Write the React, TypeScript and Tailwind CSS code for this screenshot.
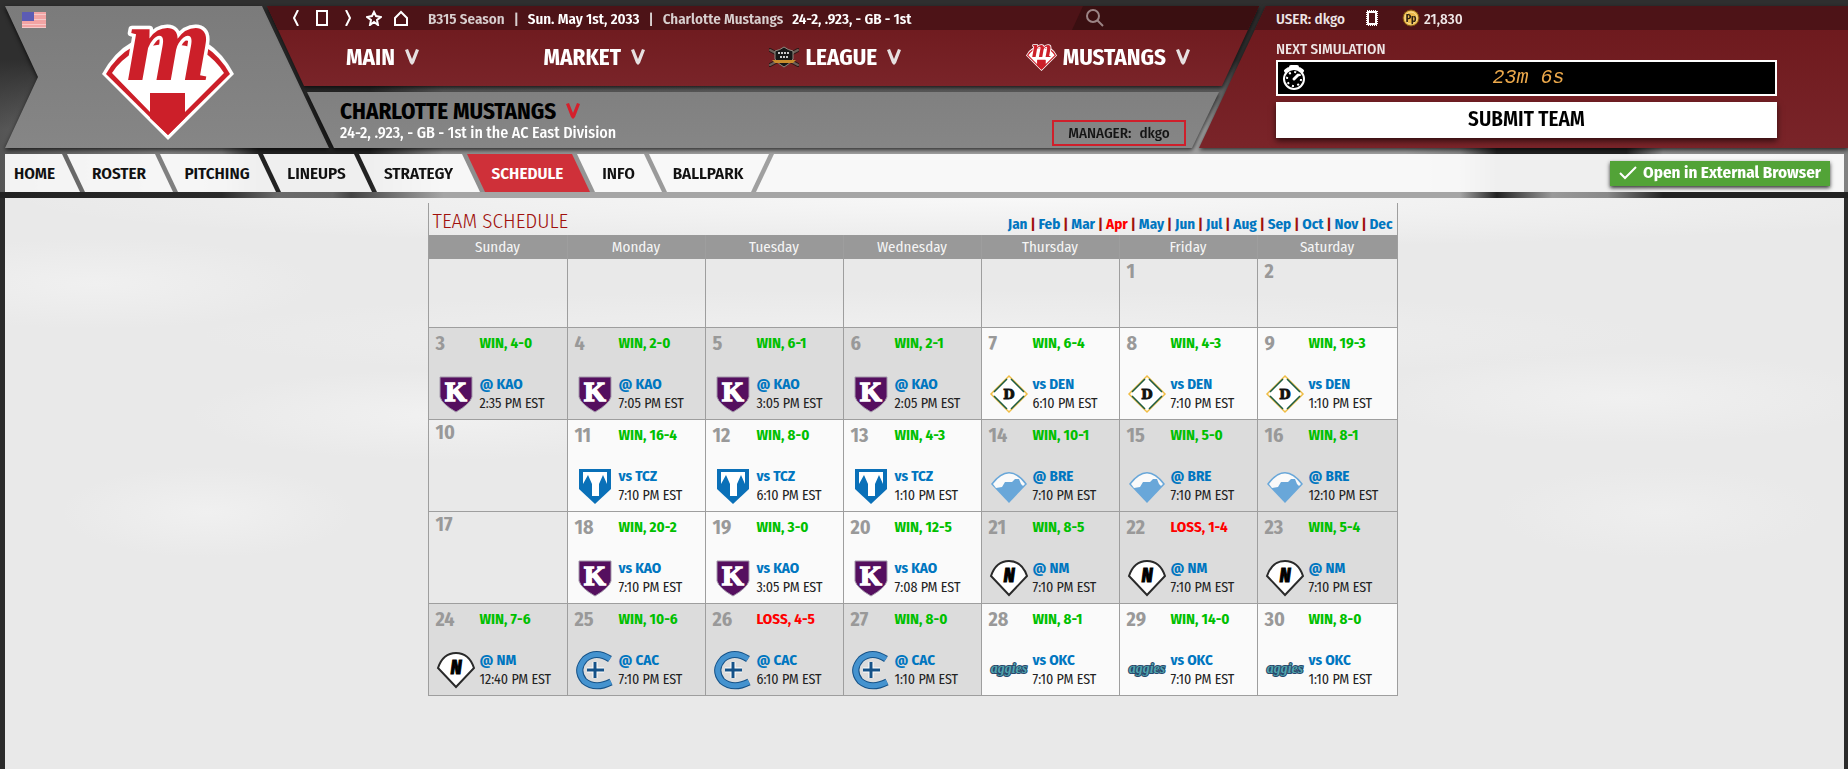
import clsx from "clsx"

interface TGame {
  day: number
  result: string
  team: string
  home?: boolean
  time: string
}

type TCell = TGame | number | null

const months = ["Jan", "Feb", "Mar", "Apr", "May", "Jun", "Jul", "Aug", "Sep", "Oct", "Nov", "Dec"]

const weekdays = ["Sunday", "Monday", "Tuesday", "Wednesday", "Thursday", "Friday", "Saturday"]

const away = (day: number, team: string, result: string, time: string): TGame => ({ day, team, result, time })

const home = (day: number, team: string, result: string, time: string): TGame => ({
  day,
  team,
  result,
  time,
  home: true,
})

const weeks: TCell[][] = [
  [null, null, null, null, null, 1, 2],
  [
    away(3, "KAO", "WIN, 4-0", "2:35 PM"),
    away(4, "KAO", "WIN, 2-0", "7:05 PM"),
    away(5, "KAO", "WIN, 6-1", "3:05 PM"),
    away(6, "KAO", "WIN, 2-1", "2:05 PM"),
    home(7, "DEN", "WIN, 6-4", "6:10 PM"),
    home(8, "DEN", "WIN, 4-3", "7:10 PM"),
    home(9, "DEN", "WIN, 19-3", "1:10 PM"),
  ],
  [
    10,
    home(11, "TCZ", "WIN, 16-4", "7:10 PM"),
    home(12, "TCZ", "WIN, 8-0", "6:10 PM"),
    home(13, "TCZ", "WIN, 4-3", "1:10 PM"),
    away(14, "BRE", "WIN, 10-1", "7:10 PM"),
    away(15, "BRE", "WIN, 5-0", "7:10 PM"),
    away(16, "BRE", "WIN, 8-1", "12:10 PM"),
  ],
  [
    17,
    home(18, "KAO", "WIN, 20-2", "7:10 PM"),
    home(19, "KAO", "WIN, 3-0", "3:05 PM"),
    home(20, "KAO", "WIN, 12-5", "7:08 PM"),
    away(21, "NM", "WIN, 8-5", "7:10 PM"),
    away(22, "NM", "LOSS, 1-4", "7:10 PM"),
    away(23, "NM", "WIN, 5-4", "7:10 PM"),
  ],
  [
    away(24, "NM", "WIN, 7-6", "12:40 PM"),
    away(25, "CAC", "WIN, 10-6", "7:10 PM"),
    away(26, "CAC", "LOSS, 4-5", "6:10 PM"),
    away(27, "CAC", "WIN, 8-0", "1:10 PM"),
    home(28, "OKC", "WIN, 8-1", "7:10 PM"),
    home(29, "OKC", "WIN, 14-0", "7:10 PM"),
    home(30, "OKC", "WIN, 8-0", "1:10 PM"),
  ],
]

const tabs = [
  { name: "HOME", width: "w-[75px]" },
  { name: "ROSTER", width: "w-[106px]" },
  { name: "PITCHING", width: "w-[116px]" },
  { name: "LINEUPS", width: "w-[109px]" },
  { name: "STRATEGY", width: "w-[121px]" },
  { name: "SCHEDULE", width: "w-[123px]" },
  { name: "INFO", width: "w-[85px]" },
  { name: "BALLPARK", width: "w-[120px]" },
]

const MustangsLogo = ({ className }: { className: string }) => (
  <svg viewBox="0 0 132 114" className={clsx("overflow-visible", className)} aria-hidden="true">
    <path d="M0 48Q12 26 30 16Q66 0 104 16Q121 27 132 48L66 114Z" fill="#fff" />
    <path d="M4 48Q14 30 32 20Q66 5 102 20Q118 30 128 48L66 109Z" fill="#cc1f29" />
    <path d="M10 47Q18 34 34 25Q66 11 100 25Q114 34 122 47L83 86V68H48V86Z" fill="#fff" />
    <text
      x="24"
      y="54"
      fontFamily="'Liberation Serif', serif"
      fontWeight="bold"
      fontStyle="italic"
      fontSize="110"
      fill="#cc1f29"
      stroke="#fff"
      strokeWidth="7"
      strokeLinejoin="round"
      paintOrder="stroke"
    >
      m
    </text>
    <path d="M48 67H83V92L66 109L48 92Z" fill="#cc1f29" />
  </svg>
)

const LeagueLogo = () => (
  <svg viewBox="0 0 30 22" className="h-[22px] w-[30px]" aria-hidden="true">
    <path d="M1 4L29 19M29 4L1 19" stroke="#2a1716" strokeWidth="4" strokeLinecap="round" />
    <path d="M1 4L29 19M29 4L1 19" stroke="#6d5f58" strokeWidth="2" strokeLinecap="round" />
    <path d="M6 5Q11 4 15 1Q19 4 24 5V13Q21 18 15 21Q9 18 6 13Z" fill="#171717" stroke="#8f8a80" />
    <path d="M9 7H21M11 11H19" stroke="#c9c9c9" strokeWidth="2" strokeDasharray="2 1" />
    <path d="M3 14H27L24 17H6Z" fill="#c98c2c" />
  </svg>
)

const Chevron = ({ className }: { className: string }) => (
  <svg viewBox="0 0 14 16" className={clsx("h-4 w-[14px]", className)} fill="currentColor" aria-hidden="true">
    <path d="M0 1L3 0L7 10L11 0L14 1L9 14L7 16L5 14Z" />
  </svg>
)

const TeamLogo = ({ team }: { team: string }) => (
  <svg viewBox="0 0 38 38" className="h-[38px] w-[38px] shrink-0 overflow-visible" aria-hidden="true">
    {team === "KAO" && (
      <>
        <path d="M3 2H35V22Q33 29 19 37Q5 29 3 22Z" fill="#550f5f" stroke="#a59bac" />
        <text
          x="19"
          y="26"
          textAnchor="middle"
          fontFamily="'Liberation Serif', serif"
          fontWeight="bold"
          fontSize="28"
          stroke="#fff"
          strokeWidth="1.5"
          fill="#fff"
        >
          K
        </text>
      </>
    )}
    {team === "DEN" && (
      <>
        <path d="M19 1L37 19L19 37L1 19Z" fill="#fff" stroke="#f0bd45" strokeWidth="1.5" />
        <path d="M17 4L4 17M21 4L34 17M17 34L4 21M21 34L34 21" stroke="#1c5c43" strokeWidth="1.5" />
        <text
          x="19"
          y="24"
          textAnchor="middle"
          fontFamily="'DejaVu Serif', serif"
          fontWeight="bold"
          fontSize="13"
          stroke="#111"
          fill="#111"
        >
          D
        </text>
      </>
    )}
    {team === "TCZ" && (
      <>
        <path d="M3 2H35V22L19 37L3 22Z" fill="#0a70b8" />
        <path d="M7 5H31V17L27 8L23 17V29H16V17L12 8L7 17Z" fill="#fff" />
      </>
    )}
    {team === "BRE" && (
      <>
        <path d="M1 17Q19-7 37 17L19 36Z" fill="#69a7d9" />
        <path d="M3 17Q19-4 35 17L33 19L31 17L29 12H25L22 15H15L12 20L6 21Z" fill="#fafafa" />
      </>
    )}
    {team === "NM" && (
      <>
        <path d="M1 17Q6 2 19 2Q32 2 37 17L19 36Z" fill="#fff" stroke="#2a2a2a" strokeWidth="2" />
        <text
          x="19"
          y="23"
          textAnchor="middle"
          fontFamily="'Fira Sans Condensed', 'Roboto Condensed', sans-serif"
          fontWeight="700"
          fontStyle="italic"
          fontSize="19"
          stroke="#000"
        >
          N
        </text>
      </>
    )}
    {team === "CAC" && (
      <>
        <path d="M34 8Q20-1 9 8Q-1 19 8 30Q19 39 35 31" fill="none" stroke="#155288" strokeWidth="7" />
        <path d="M34 8Q20-1 9 8Q-1 19 8 30Q19 39 35 31" fill="none" stroke="#4593cf" strokeWidth="5" />
        <path d="M19 11V27M11 19H28" stroke="#fff" strokeWidth="5" />
        <path d="M19 11V27M11 19H28" stroke="#155288" strokeWidth="3" />
      </>
    )}
    {team === "OKC" && (
      <text
        x="19"
        y="22"
        textAnchor="middle"
        fontFamily="'Liberation Serif', serif"
        fontWeight="bold"
        fontStyle="italic"
        fontSize="14"
        fill="#4fa3ad"
        stroke="#27476a"
        strokeWidth="2"
        paintOrder="stroke"
      >
        aggies
      </text>
    )}
  </svg>
)

const Header = () => {
  const bar = "bg-linear-to-b from-[#6c181c] to-[#7a2429]"
  return (
    <header className="flex pl-[5px] pt-1.5">
      <div className="drop-shadow-[0_2px_2px_rgba(0,0,0,0.7)]">
        <div className="flex h-[142px] w-[324px] items-start bg-linear-to-b from-[#7b7b7b] to-[#868686] [clip-path:polygon(0_0,257px_0,100%_100%,0_100%,33px_50%)]">
          <svg viewBox="0 0 24 16" className="ml-[17px] mt-1.5 h-4 w-6" role="img" aria-label="United States">
            <path d="M0 0H24V16H0Z" fill="#f6c9c9" />
            <path d="M0 1H24M0 4H24M0 6H24M0 9H24M0 11H24M0 14H24" stroke="#ee7f7f" />
            <path d="M0 0H12V9H0Z" fill="#5c5cb4" />
          </svg>
          <MustangsLogo className="ml-14 mt-5 h-[114px] w-[132px]" />
        </div>
      </div>

      <div className="-ml-[62px] flex min-w-0 flex-1 flex-col gap-1.5">
        <div className="drop-shadow-[0_2px_2px_rgba(0,0,0,0.7)]">
          <div className={clsx("h-20 [clip-path:polygon(0_0,100%_0,calc(100%-37px)_100%,37px_100%)]", bar)}>
            <div className="flex h-6 items-center bg-[#4d1317] pl-[25px] text-[15px] font-medium whitespace-nowrap text-[#d8cfcf]">
              <div className="flex w-[136px] items-center text-white">
                <button aria-label="Back" className="w-6">
                  <svg viewBox="0 0 8 16" className="h-4 w-2" fill="none" stroke="currentColor" strokeWidth="2">
                    <path d="M6 0L2 8L6 16" />
                  </svg>
                </button>
                <button aria-label="Page" className="w-7">
                  <svg viewBox="0 0 12 16" className="h-4 w-3" fill="none" stroke="currentColor" strokeWidth="2">
                    <path d="M1 1H11V15H1Z" />
                  </svg>
                </button>
                <button aria-label="Forward" className="w-[22px]">
                  <svg viewBox="0 0 8 16" className="h-4 w-2" fill="none" stroke="currentColor" strokeWidth="2">
                    <path d="M2 0L6 8L2 16" />
                  </svg>
                </button>
                <button aria-label="Favorites" className="w-7">
                  <svg viewBox="0 0 16 16" className="h-4 w-4" fill="none" stroke="currentColor" strokeWidth="2">
                    <path d="M8 2L10 6L15 7L11 10L12 15L8 12L4 15L5 10L1 7L6 6Z" />
                  </svg>
                </button>
                <button aria-label="Home" className="w-6">
                  <svg viewBox="0 0 14 16" className="h-4 w-[14px]" fill="none" stroke="currentColor" strokeWidth="2">
                    <path d="M1 15V8L7 2L13 8V15Z" />
                  </svg>
                </button>
              </div>
              <div className="flex gap-[9px] pt-0.5 font-semibold">
                <span>B315 Season</span>
                <span>|</span>
                <span className="text-white">Sun. May 1st, 2033</span>
                <span>|</span>
                <span>Charlotte Mustangs</span>
                <span className="text-white">24-2, .923, - GB - 1st</span>
              </div>
              <label className="ml-auto flex h-full w-[187px] items-center bg-[#3a0f11] pl-[14px] [clip-path:polygon(11px_0,100%_0,100%_100%,0_100%)]">
                <svg viewBox="0 0 18 18" className="h-[18px] w-[18px]" fill="none" stroke="#9b8485" strokeWidth="2">
                  <circle cx="7" cy="7" r="6" />
                  <path d="M11 11L17 17" />
                </svg>
                <input type="search" aria-label="Search" className="ml-2 w-24 bg-transparent text-white outline-none" />
              </label>
            </div>
            <nav className="flex h-[54px] items-center justify-between pl-[79px] pr-[69px] text-[23px] font-bold text-white">
              <button className="flex items-center gap-2.5">
                MAIN
                <Chevron className="text-[#e6e0e0]" />
              </button>
              <button className="flex items-center gap-2.5">
                MARKET
                <Chevron className="text-[#e6e0e0]" />
              </button>
              <button className="flex items-center gap-2.5">
                <span className="flex items-center gap-1.5">
                  <LeagueLogo />
                  LEAGUE
                </span>
                <Chevron className="text-[#e6e0e0]" />
              </button>
              <button className="flex items-center gap-2.5">
                <span className="flex items-center gap-1.5">
                  <MustangsLogo className="h-[27px] w-[31px]" />
                  MUSTANGS
                </span>
                <Chevron className="text-[#e6e0e0]" />
              </button>
            </nav>
          </div>
        </div>

        <div className="mx-10 drop-shadow-[0_2px_2px_rgba(0,0,0,0.7)]">
          <div className="flex h-14 items-end justify-between bg-linear-to-b from-[#808080] to-[#868686] px-[33px] [clip-path:polygon(0_0,100%_0,calc(100%-27px)_100%,27px_100%)]">
            <div className="pb-[5px]">
              <h1>
                <button className="flex items-center gap-2.5 text-[23px] leading-6 font-bold text-black">
                  CHARLOTTE MUSTANGS
                  <Chevron className="text-[#d5202c]" />
                </button>
              </h1>
              <p className="text-[16px] leading-5 font-medium text-white">
                24-2, .923, - GB - 1st in the AC East Division
              </p>
            </div>
            <div className="mb-0.5 flex h-[26px] w-[134px] items-center justify-center gap-2 border-2 border-[#cf1f2b] text-[15px] font-medium text-[#151515]">
              <span>MANAGER:</span>
              <span>dkgo</span>
            </div>
          </div>
        </div>
      </div>

      <div className="-ml-[60px] drop-shadow-[0_2px_2px_rgba(0,0,0,0.7)]">
        <div
          className={clsx(
            "h-[142px] w-[649px] text-[15px] font-medium text-[#eee6e6] [clip-path:polygon(67px_0,100%_0,100%_100%,0_100%)]",
            bar,
          )}
        >
          <div className="flex h-6 items-center bg-[#4d1317] pl-[77px]">
            <span className="w-[90px] pt-0.5">USER: dkgo</span>
            <svg viewBox="0 0 12 16" className="h-4 w-3" fill="none" stroke="#fff" aria-hidden="true">
              <path d="M2 2H10V14H2Z" strokeWidth="2" />
              <path d="M1 1H11V15H1Z" strokeWidth="2" strokeDasharray="1 1" />
            </svg>
            <svg viewBox="0 0 18 18" className="ml-6 h-[18px] w-[18px]" aria-hidden="true">
              <circle cx="9" cy="9" r="8" fill="#ecb94a" stroke="#7a4f12" />
              <circle cx="9" cy="9" r="6" fill="none" stroke="#fbe19a" />
              <text x="9" y="13" textAnchor="middle" fontSize="10" fontWeight="bold" fill="#2d2013">
                Pp
              </text>
            </svg>
            <span className="ml-1 pt-0.5">21,830</span>
          </div>
          <div className="flex flex-col pr-[71px] pl-[77px]">
            <h2 className="mt-2 mb-1 h-[18px] leading-[22px]">NEXT SIMULATION</h2>
            <div className="flex h-9 items-center border-2 border-white bg-black px-1">
              <svg viewBox="0 0 24 26" className="h-[26px] w-6" fill="none" stroke="#fff" aria-hidden="true">
                <path d="M4 6L7 4M20 6L17 4M9 2H15" strokeWidth="4" strokeLinecap="round" />
                <circle cx="12" cy="14" r="10" strokeWidth="2" fill="#000" />
                <circle cx="12" cy="14" r="7" strokeWidth="2" strokeDasharray="2 3.5" />
                <path d="M12 14L16 10" strokeWidth="3" strokeLinecap="round" />
              </svg>
              <span className="flex-1 pr-5 text-center font-['Liberation_Mono',monospace] text-[20px] font-normal italic text-[#eda94b]">
                23m 6s
              </span>
            </div>
            <button className="mt-1.5 h-9 bg-white text-[21px] font-semibold text-black shadow-[0_3px_6px_rgba(0,0,0,0.6)]">
              SUBMIT TEAM
            </button>
          </div>
        </div>
      </div>
    </header>
  )
}

const TabBar = () => (
  <div className="mt-1.5 mr-1 ml-[5px] flex h-[38px]">
    <nav className="flex text-[17px] font-semibold text-[#111]">
      {tabs.map(({ name, width }, i) => (
        <a
          key={name}
          href={`#${name.toLowerCase()}`}
          className={clsx(
            "flex items-center justify-center pt-0.5",
            width,
            i > 0 && "-ml-[13px]",
            i === 0 && "pr-4 [clip-path:polygon(0_0,57px_0,100%_100%,0_100%)]",
            i > 0 &&
              i < tabs.length - 1 &&
              "[clip-path:polygon(0_0,calc(100%-18px)_0,100%_100%,18px_100%)]",
            i > 0 && "pr-0.5",
            i === tabs.length - 1 && "[clip-path:polygon(0_0,100%_0,calc(100%-18px)_100%,18px_100%)]",
            name === "SCHEDULE" ? "bg-[#cf3039] text-white" : "bg-white/93",
          )}
        >
          {name}
        </a>
      ))}
    </nav>
    <div className="-ml-[13px] flex flex-1 items-center justify-end bg-white/93 pr-3.5 [clip-path:polygon(18px_0,100%_0,100%_100%,0_100%)]">
      <button className="flex h-[25px] w-[220px] items-center justify-center gap-1.5 bg-[#52a337] text-[17px] font-bold whitespace-nowrap text-white shadow-[0_2px_4px_rgba(0,0,0,0.8)]">
        <svg viewBox="0 0 18 14" className="h-[14px] w-[18px]" fill="none" stroke="currentColor" strokeWidth="2">
          <path d="M1 7L6 12L17 1" />
        </svg>
        Open in External Browser
      </button>
    </div>
  </div>
)

const DayCell = ({ cell }: { cell: TCell }) => {
  const border = "border-r border-b border-[#9e9e9e] p-0 align-top last:border-r-0"

  if (cell === null || typeof cell === "number") {
    return (
      <td className={border}>
        <div className="pl-[7px] text-[20px] leading-6 font-bold text-[#999]">{cell}</div>
      </td>
    )
  }

  const { day, result, team, time, home: isHome } = cell
  return (
    <td className={clsx(border, isHome ? "bg-[#fafafa]" : "bg-[#dcdcdc]")}>
      <div className="flex h-[30px] items-center pl-[7px]">
        <span className="w-11 text-[20px] font-bold text-[#999]">{day}</span>
        <span className={clsx("text-[15px] font-bold", result.startsWith("WIN") ? "text-[#00c000]" : "text-[#f00]")}>
          {result}
        </span>
      </div>
      <div className="mt-4 flex items-center gap-[5px] pl-2">
        <TeamLogo team={team} />
        <div className="whitespace-nowrap">
          <a href={`#${team}`} className="block text-[15px] leading-5 font-bold text-[#0076c0]">
            {isHome ? "vs" : "@"} {team}
          </a>
          <div className="text-[14px] leading-5 text-[#222]">{time} EST</div>
        </div>
      </div>
    </td>
  )
}

const Schedule = () => (
  <section className="mx-auto w-[970px] border-x border-[#9e9e9e]">
    <div className="flex h-8 items-end justify-between px-1">
      <h2 className="text-[21px] leading-[28px] font-light text-[#a0100c]">TEAM SCHEDULE</h2>
      <nav className="flex text-[15px] leading-[22px] font-bold">
        {months.map((month, i) => (
          <span key={month} className="flex text-[#a0100c]">
            {i > 0 && <span className="px-[3px]">|</span>}
            <a href={`#${month}`} className={month === "Apr" ? "text-[#f00]" : "text-[#0076c0]"}>
              {month}
            </a>
          </span>
        ))}
      </nav>
    </div>
    <table className="w-full table-fixed border-separate border-spacing-0">
      <thead>
        <tr className="h-6 bg-[#999] text-[15px] leading-6 text-[#f5f5f5]">
          {weekdays.map((day) => (
            <th
              key={day}
              className="border-r border-[#9e9e9e] p-0 font-normal first:w-[139px] last:w-[139px] last:border-r-0"
            >
              {day}
            </th>
          ))}
        </tr>
      </thead>
      <tbody>
        {weeks.map((week, i) => (
          <tr key={i} className={i === 0 ? "h-[69px]" : "h-[92px]"}>
            {week.map((cell, j) => (
              <DayCell key={j} cell={cell} />
            ))}
          </tr>
        ))}
      </tbody>
    </table>
  </section>
)

const App = () => {
  return (
    <div className="flex min-h-screen flex-col bg-[#2b2b2b] bg-[linear-gradient(#2f2f2f_0,#2f2f2f_60px,transparent_130px),linear-gradient(90deg,#555_0,#808080_9%,#777_12%,#222_14%,#222_20%,#8c8c8c_24%,#a0a0a0_40%,#a0a0a0_76%,#888_79%,#222_81%,#222_88%,#909090_90%,#808080_100%)] bg-size-[100%_192px] bg-no-repeat font-['Fira_Sans_Condensed','Roboto_Condensed',sans-serif]">
      <Header />
      <TabBar />
      <div className="flex flex-1 flex-col bg-[linear-gradient(90deg,#222_0,#2a2a2a_12%,#6a6a6a_15%,#666_18%,#444_19%,#a5a5a5_24%,#a5a5a5_79%,#222_81%,#999_84%,#888_87%,#222_90%,#222_100%)] bg-size-[100%_6px] bg-no-repeat pt-1.5 pr-1 pl-[5px]">
        <main className="flex-1 bg-[#e9e9e9] bg-[radial-gradient(ellipse_55%_9%_at_55%_0,#f8f8f8,transparent),radial-gradient(ellipse_12%_8%_at_5%_15%,#f0f0f0,transparent),radial-gradient(ellipse_14%_8%_at_24%_38%,#f1f1f1,transparent),radial-gradient(ellipse_14%_8%_at_88%_35%,#f0f0f0,transparent),radial-gradient(ellipse_9%_8%_at_90%_55%,#eee,transparent),radial-gradient(ellipse_8%_8%_at_11%_55%,#f0f0f0,transparent),radial-gradient(ellipse_40%_8%_at_50%_24%,#f0f0f0,transparent)] pt-[5px] pr-6 pb-10">
          <Schedule />
        </main>
      </div>
    </div>
  )
}

export default App
